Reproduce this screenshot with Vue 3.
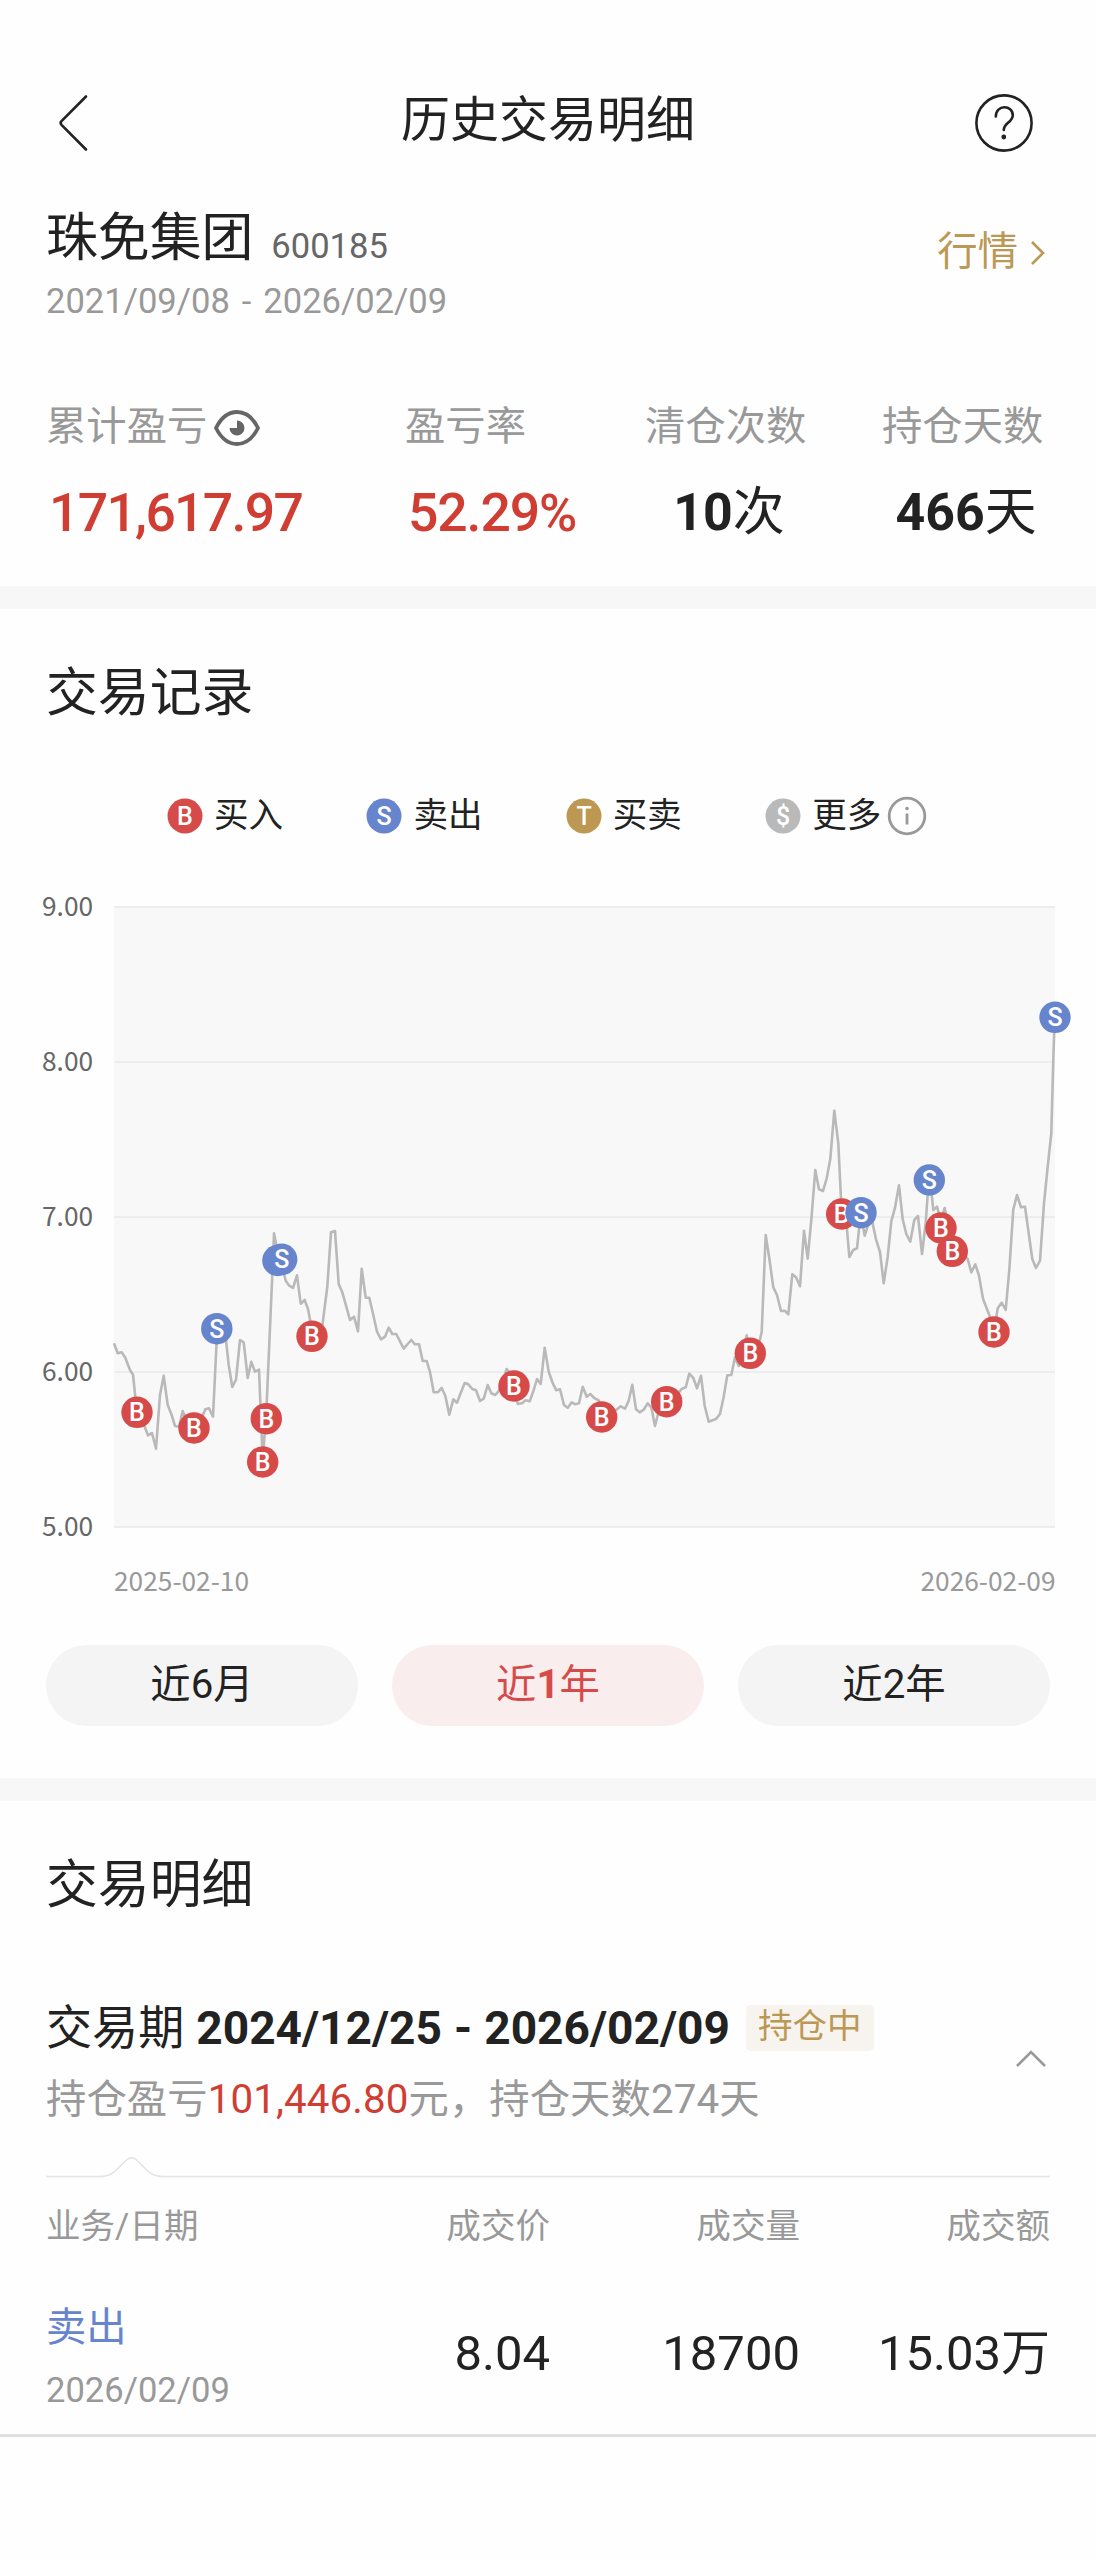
<template>
  <div class="page">
    <header class="nav-bar">
      <svg class="back" width="40" height="60" viewBox="0 0 40 60">
        <path d="M33 3.5 L8.5 28.2 Q6.8 30 8.5 31.8 L33 56.5" />
      </svg>
      <h1>历史交易明细</h1>
      <svg class="help" width="60" height="60" viewBox="0 0 60 60">
        <circle cx="30" cy="30" r="27.6" />
        <path d="M21.8 23.5 C21.8 11.2 38.8 11.6 38.8 22.2 C38.8 29.2 29.8 30 29.8 37" />
        <circle class="dot" cx="29.8" cy="44" r="2.4" />
      </svg>
    </header>

    <section class="summary">
      <div class="stock">
        <div>
          <div class="stock-name">珠免集团<span class="code">600185</span></div>
          <div class="stock-range">2021/09/08 - 2026/02/09</div>
        </div>
        <a class="quote">
          <span>行情</span>
          <svg width="16" height="26" viewBox="0 0 16 26"><path d="M2 2 L13 13 L2 24" /></svg>
        </a>
      </div>

      <div class="stats">
        <div class="stat">
          <div class="stat-label">累计盈亏
            <svg class="eye" width="46" height="38" viewBox="0 0 46 38">
              <path d="M2 19 Q10 3 23 3 Q36 3 44 19 Q36 35 23 35 Q10 35 2 19 Z" />
              <path class="pupil" d="M23 19 V11.5 A7.5 7.5 0 1 1 15.5 19 Z" />
            </svg>
          </div>
          <div class="stat-value red">171,617.97</div>
        </div>
        <div class="stat">
          <div class="stat-label">盈亏率</div>
          <div class="stat-value red rate">52.29<span class="percent">%</span></div>
        </div>
        <div class="stat center">
          <div class="stat-label">清仓次数</div>
          <div class="stat-value"><b>10</b>次</div>
        </div>
        <div class="stat center">
          <div class="stat-label">持仓天数</div>
          <div class="stat-value"><b>466</b>天</div>
        </div>
      </div>
    </section>

    <section class="record">
      <h2>交易记录</h2>
      <div class="legend">
        <div v-for="item in legend" :key="item.text" class="legend-item">
          <svg width="36" height="36" viewBox="0 0 36 36">
            <circle cx="18" cy="18" r="17.5" :class="item.type" />
            <text x="18" y="27" class="legend-letter">{{ item.letter }}</text>
          </svg>
          <span>{{ item.text }}</span>
          <svg v-if="item.info" class="info" width="40" height="40" viewBox="0 0 40 40">
            <circle cx="20" cy="20" r="17.8" />
            <path d="M20 17.5 V28.5" />
            <circle class="dot" cx="20" cy="12.5" r="1.8" />
          </svg>
        </div>
      </div>

      <svg class="chart" width="1096" height="730" viewBox="0 870 1096 730">
        <rect x="114" y="907" width="941" height="620" class="plot" />
        <g v-for="(label, i) in axis" :key="label">
          <line x1="114" x2="1055" :y1="907 + i * 155" :y2="907 + i * 155" class="grid" />
          <text x="42" :y="915.5 + i * 155" class="axis-text">{{ label }}</text>
        </g>
        <text x="114" y="1591" class="date-text">2025-02-10</text>
        <text x="1055.5" y="1591" class="date-text end">2026-02-09</text>
        <polyline :points="prices" class="price" />
        <g v-for="(m, i) in markers" :key="i">
          <circle :cx="m[1]" :cy="m[2]" r="15.7" :class="m[0] === 'B' ? 'buy' : 'sell'" />
          <text :x="m[1]" :y="m[2] + 9" class="marker-letter">{{ m[0] }}</text>
        </g>
      </svg>

      <div class="tabs">
        <button
          v-for="tab in tabs"
          :key="tab.num"
          :class="{ active: current === tab.num }"
          @click="current = tab.num"
        >近<span>{{ tab.num }}</span>{{ tab.unit }}</button>
      </div>
    </section>

    <section class="detail">
      <h2>交易明细</h2>
      <div class="period">
        <div>
          <div class="period-title">交易期 <b>2024/12/25 - 2026/02/09</b><span class="tag">持仓中</span></div>
          <div class="period-info">持仓盈亏<span class="red">101,446.80</span>元，持仓天数274天</div>
        </div>
        <svg class="fold" width="32" height="20" viewBox="0 0 32 20"><path d="M2 17 L16 3 L30 17" /></svg>
      </div>
      <svg class="divider" width="1004" height="24" viewBox="0 0 1004 24">
        <path d="M0 21.5 H54 C68 21.5 71 13 81 4.5 Q85.5 0.8 90 4.5 C100 13 103 21.5 117 21.5 H1004" />
      </svg>

      <div class="row head">
        <span>业务/日期</span>
        <span>成交价</span>
        <span>成交量</span>
        <span>成交额</span>
      </div>
      <div class="row">
        <div>
          <div class="side">卖出</div>
          <div class="day">2026/02/09</div>
        </div>
        <span class="num">8.04</span>
        <span class="num">18700</span>
        <span class="num">15.03万</span>
      </div>
    </section>
  </div>
</template>

<script setup>
import { ref } from 'vue'

const current = ref(1)

const tabs = [
  { num: 6, unit: '月' },
  { num: 1, unit: '年' },
  { num: 2, unit: '年' },
]

const legend = [
  { letter: 'B', text: '买入', type: 'buy' },
  { letter: 'S', text: '卖出', type: 'sell' },
  { letter: 'T', text: '买卖', type: 'both' },
  { letter: '$', text: '更多', type: 'more', info: true },
]

const axis = ['9.00', '8.00', '7.00', '6.00', '5.00']

// one point per trading day
const prices = `114,1343.3 117.7,1353.3 121.7,1352.3 125.3,1357.7 130,1370 133,1374.7 135.3,1396.7 137,1412
140.7,1421 144.7,1426.7 148,1435.3 152,1433 156,1448.7 160,1395 163.7,1375.7 167.7,1405 171.3,1414 175,1426
179,1426.7 182.7,1411 186.7,1421.7 194,1428 201.7,1418.3 205.3,1409.3 209,1408.3 213,1416.7 216.7,1340
220.7,1329 226,1340 228.7,1365 232.3,1387 236,1379.7 240,1340 243.7,1342.3 247.7,1378 251.3,1361.7 255,1371.7
259,1369.7 261,1418.7 262.5,1456 264,1443 266.7,1403.3 272.3,1275 274,1233.3 276.3,1245 278,1260 281.7,1260
284.3,1275 285.7,1280.7 289.3,1285.7 293,1288 297,1275.3 300.7,1303.7 304.7,1300 308,1309 310.7,1323.3
312.3,1336 320,1336 322.7,1323 327.3,1286.7 331,1232.3 335,1231 338.7,1284 342.3,1292.3 346.3,1306.7 350,1320
354,1316.7 358,1331.3 361.7,1268.7 365.7,1297.7 369.3,1297.7 373.3,1315 377,1331.7 381,1339.3 385,1336.7
388.7,1327.7 392.3,1334 396.3,1334 400,1341.3 403.7,1348.7 407.7,1344 411.3,1340 415,1344.3 419,1344.3
422.7,1361 426.7,1361 430,1372 433.7,1392.3 437.7,1392.3 441.7,1388 445.3,1395.7 449.3,1414.7 453.3,1399.3
457,1402.7 461,1392.3 464.7,1383 468.3,1384.3 472.3,1389 476,1390.3 480,1401 483.7,1398.7 487.7,1385
491.3,1393.3 495.3,1395 499,1390.7 502.7,1381.7 506.7,1369 510.3,1373.3 514,1393.3 518,1404 522,1403.3
525.7,1400.3 529.7,1401.3 533.3,1391.3 537,1379 540.7,1384 544.7,1347.7 548.7,1371.7 552.7,1383 556.3,1390.3
560,1389.3 564,1405 567.7,1407.7 571.7,1402.3 575.3,1404.3 579,1403.3 582.7,1386.7 586.7,1396.7 590.3,1394
594.3,1398 599,1400.7 602,1416.7 609.3,1415 617,1409.3 620.7,1406.3 625,1408.7 628.7,1400.7 632.3,1384.7
636,1409.3 639.7,1412.3 643.7,1409.7 647.7,1403.3 651.3,1407.3 655,1426 659,1410 666.7,1401.7 674,1400
678,1393.3 682,1388.7 685.7,1387.3 689.3,1373.7 693.3,1378 697,1388.3 701,1375.7 704.7,1405.7 708.7,1421.7
716,1419 720,1414 723.7,1396.7 727.3,1375.3 731.3,1375 735,1357.3 738.7,1366 742.7,1350 746.7,1335.3
750.3,1353.3 758.3,1346.7 761.7,1332 765.7,1235 769.3,1258.3 773.3,1287.3 777,1295 781,1311 784.7,1310.7
788.3,1314.3 792.3,1274.3 796,1277.3 800,1286.3 804,1230.7 807.7,1258.7 811.3,1220 815.3,1170 819,1189.3
823,1191 826.7,1178.3 830.3,1159 834.3,1110.7 838.3,1143.3 841.7,1213.3 845.7,1213 849.3,1257 853.3,1250
857,1248.3 860.7,1213 864.7,1235.7 868.7,1223 872.3,1221.7 876,1239.3 880,1252 883.7,1283.3 887.7,1256.7
891.3,1221.3 895,1207.7 899,1185.3 902.7,1219.3 906.3,1234 910.3,1241.7 914.3,1220 918,1216 922,1254
925.7,1223 928.7,1180 930.7,1185 933.3,1210 937,1206.7 940.7,1220 944.7,1208 948.3,1226.7 952.3,1251.7
963.3,1253.3 967.7,1259 971.3,1272.3 975.3,1264.3 979,1275.7 983,1298.7 989.3,1315 994,1332 997.7,1308.3
1001.7,1302.7 1005.7,1310 1009.3,1270 1013.3,1209.3 1017,1195 1021,1207.3 1025,1206.7 1028.7,1233.3
1032.3,1259 1036,1268 1040,1260.7 1044,1203.3 1047.7,1166.7 1051.3,1133.3 1053.3,1060 1054.7,1017.3`

const markers = [
  ['B', 137, 1412.3],
  ['B', 194, 1428],
  ['S', 216.8, 1328.7],
  ['B', 262.7, 1462],
  ['B', 266.3, 1418.7],
  ['S', 277.9, 1260.5],
  ['S', 281.7, 1259.3],
  ['B', 312, 1336.3],
  ['B', 514, 1386],
  ['B', 601.7, 1417],
  ['B', 666.7, 1401.7],
  ['B', 750.3, 1353.3],
  ['B', 841.7, 1214],
  ['S', 861, 1212.7],
  ['S', 929.3, 1180],
  ['B', 941, 1228],
  ['B', 952.3, 1251.3],
  ['B', 994, 1332],
  ['S', 1055, 1017.3],
]
</script>

<style>
body {
  background: #fff;
}
</style>

<style scoped>
.page {
  width: 1096px;
  height: 2560px;
  box-sizing: border-box;
  padding-top: 60px;
  background: #fefefe;
  color: #222;
  font-family: Roboto, "Noto Sans CJK SC", sans-serif;
}

svg {
  display: block;
  flex: none;
  fill: none;
}

h1,
h2 {
  margin: 0;
  font-weight: 400;
}

.red {
  color: #cf3d33;
}

.nav-bar {
  display: flex;
  justify-content: space-between;
  height: 121px;
  padding: 0 62px 0 53px;
}

.nav-bar h1 {
  font-size: 49px;
  line-height: 122px;
  padding-left: 29px;
}

.back,
.help {
  margin-top: 33px;
  stroke: #222;
  stroke-width: 2.6;
  stroke-linecap: round;
}

.dot {
  fill: #222;
  stroke: none;
}

.summary {
  height: 405px;
  box-sizing: border-box;
  padding: 28px 46px 0;
}

.stock {
  display: flex;
  justify-content: space-between;
}

.stock-name {
  display: flex;
  height: 60px;
  font-size: 51.84px;
  line-height: 60px;
}

.code {
  margin: 7px 0 0 18px;
  font-size: 34.56px;
  color: #666;
}

.stock-range {
  margin-top: 12px;
  font-size: 34.56px;
  line-height: 40px;
  word-spacing: 3.4px;
  color: #999;
}

.quote {
  display: flex;
  align-items: center;
  gap: 12px;
  height: 40px;
  margin-top: 24px;
  padding-right: 4px;
  font-size: 40.32px;
  color: #bc9855;
}

.quote span {
  line-height: 40px;
  padding-bottom: 3px;
}

.quote svg {
  stroke: #bc9855;
  stroke-width: 2.6;
}

.stats {
  display: grid;
  grid-template-columns: 359px 240px 237px 168px;
  margin-top: 82px;
}

.stat-label {
  display: flex;
  align-items: center;
  height: 48px;
  font-size: 40.32px;
  line-height: 48px;
  color: #999;
  white-space: nowrap;
}

.eye {
  margin: 2px 0 0 7px;
  stroke: #666;
  stroke-width: 3.8;
}

.eye .pupil {
  fill: #666;
  stroke: none;
}

.stat-value {
  margin-top: 32px;
  font-size: 51.84px;
  line-height: 60px;
  white-space: nowrap;
}

.stat-value.red {
  padding-left: 3px;
  font-size: 53.5px;
  font-weight: 500;
  letter-spacing: -1.7px;
}

.stat-value.rate {
  letter-spacing: -1.1px;
}

.percent {
  font-size: 52px;
}

.stat.center .stat-value {
  width: 168px;
  text-align: center;
}

.record {
  height: 1192px;
  box-sizing: border-box;
  padding-top: 55px;
  border-top: 23px solid #f7f7f7;
}

h2 {
  padding-left: 46px;
  font-size: 51.84px;
  line-height: 60px;
}

.record h2 {
  height: 72px;
}

.legend {
  display: flex;
  gap: 83.3px;
  height: 40px;
  margin-top: 60px;
  padding-left: 167px;
}

.legend-item {
  display: flex;
  align-items: center;
  font-size: 34.56px;
  line-height: 40px;
}

.legend-item span {
  margin-left: 11px;
  padding-bottom: 2px;
}

.buy {
  fill: #d64b49;
}

.sell {
  fill: #6785cd;
}

.both {
  fill: #bd9853;
}

.more {
  fill: #b9b9b9;
}

.legend-letter,
.marker-letter {
  fill: #fff;
  font-size: 25px;
  font-weight: 500;
  text-anchor: middle;
}

.info {
  margin-left: 6px;
  stroke: #999;
  stroke-width: 2.8;
}

.info .dot {
  fill: #999;
}

.chart {
  margin-top: 34px;
}

.plot {
  fill: #f8f8f8;
}

.grid {
  stroke: #ededed;
  stroke-width: 2;
}

.price {
  stroke: #b9b9b9;
  stroke-width: 2.6;
  stroke-linejoin: round;
}

.axis-text,
.date-text {
  fill: #666;
  font-family: "Noto Sans CJK SC", sans-serif;
  font-size: 26.3px;
}

.date-text {
  fill: #999;
}

.date-text.end {
  text-anchor: end;
}

.tabs {
  display: flex;
  gap: 34px;
  margin-top: 45px;
  padding: 0 46px;
}

.tabs button {
  flex: 1;
  height: 81px;
  padding: 0 0 11px;
  border: 0;
  border-radius: 41px;
  background: #f4f4f4;
  color: #222;
  font-family: inherit;
  font-size: 40.32px;
}

.tabs .active {
  background: #faeded;
  color: #d64b49;
}

.tabs .active span {
  font-weight: 700;
}

.detail {
  height: 659px;
  box-sizing: border-box;
  padding-top: 55px;
  border-top: 23px solid #f7f7f7;
  border-bottom: 3px solid #e0e0e0;
}

.period {
  display: flex;
  justify-content: space-between;
  margin-top: 82px;
  padding: 0 49px 0 46px;
}

.period-title {
  display: flex;
  align-items: center;
  height: 60px;
  font-size: 46.08px;
  line-height: 60px;
  word-spacing: 0.6px;
  white-space: pre;
}

.tag {
  height: 46px;
  margin-left: 16px;
  padding: 0 12px;
  border-radius: 5px;
  background: #f7f3ee;
  color: #bc9855;
  font-size: 34.56px;
  line-height: 42px;
}

.period-info {
  margin-top: 12px;
  font-size: 40.32px;
  line-height: 60px;
  letter-spacing: 0.1px;
  color: #999;
}

.fold {
  margin-top: 51px;
  stroke: #999;
  stroke-width: 2.6;
}

.divider {
  margin: 25px 46px 0;
  stroke: #e3e3e3;
  stroke-width: 1.5;
}

.row {
  display: grid;
  grid-template-columns: 254px 250px 250px 250px;
  padding: 0 46px;
  text-align: right;
}

.row > :first-child {
  text-align: left;
}

.head {
  margin-top: 27px;
  font-size: 34.56px;
  line-height: 40px;
  color: #999;
}

.side {
  margin-top: 58px;
  font-size: 40.32px;
  line-height: 48px;
  color: #6785cd;
}

.day {
  margin-top: 18px;
  font-size: 34.56px;
  line-height: 40px;
  color: #999;
}

.num {
  margin-top: 78px;
  font-size: 49px;
  line-height: 60px;
}
</style>
